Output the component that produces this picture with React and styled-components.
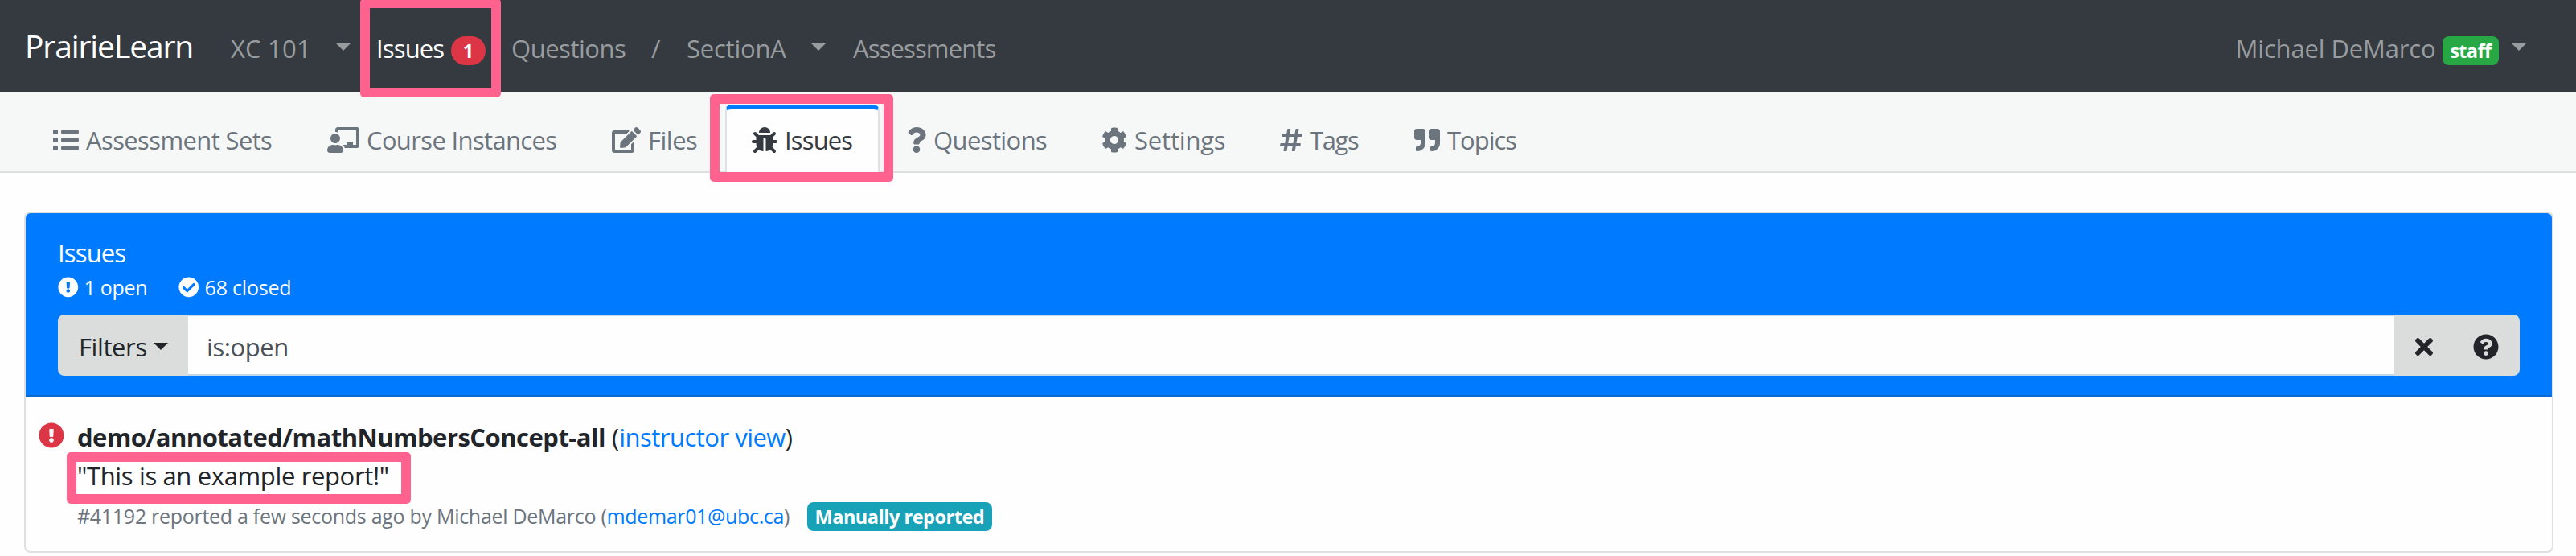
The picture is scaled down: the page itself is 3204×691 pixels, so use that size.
import React from 'react';
import styled, { createGlobalStyle, css } from 'styled-components';
import {
  FaList,
  FaChalkboardTeacher,
  FaEdit,
  FaBug,
  FaQuestion,
  FaCog,
  FaHashtag,
  FaQuoteRight,
  FaExclamationCircle,
  FaCheckCircle,
  FaTimes,
  FaQuestionCircle,
} from 'react-icons/fa';

const GlobalStyle = createGlobalStyle`
  *, *::before, *::after { box-sizing: border-box; }
  body {
    margin: 0;
    background: #fefefe;
    color: #212529;
    font-family: "Open Sans", "Noto Sans", sans-serif;
    font-size: 31px;
    line-height: 48px;
  }
`;

const Page = styled.div`
  position: relative;
  height: 691px;
  overflow: hidden;
`;

const Text = styled.span`
  white-space: nowrap;
  letter-spacing: ${({ $track = 0 }) => $track}px;
`;

const Link = styled.a`
  color: #007bff;
  white-space: nowrap;
  letter-spacing: ${({ $track = 0 }) => $track}px;
`;

/* Top bar */

const NavBar = styled.nav`
  display: flex;
  align-items: baseline;
  height: 114px;
  padding: 26.5px 62px 0 31px;
  background: #343a40;
  color: #999c9f;
  line-height: 60px;
`;

const Brand = styled.div`
  width: 256px;
  color: #fff;
  font-size: 39px;
  letter-spacing: -1.1px;
`;

const NavItem = styled.div`
  display: flex;
  align-items: baseline;
  flex: none;
  width: ${({ $width }) => $width}px;
  color: ${({ $active }) => ($active ? '#fff' : 'inherit')};
`;

const UserMenu = styled.div`
  display: flex;
  align-items: baseline;
  margin-left: auto;
`;

const Caret = styled.span`
  align-self: flex-start;
  width: 0;
  height: 0;
  margin-top: ${({ $top = 0 }) => $top}px;
  margin-left: ${({ $gap }) => $gap}px;
  border: 9.6px solid transparent;
  border-top-color: currentColor;
  border-bottom: 0;
`;

const tones = { danger: '#dc3545', success: '#28a745', info: '#17a2b8' };

const Badge = styled.span`
  display: inline-block;
  height: 36px;
  padding: 1px ${({ $pill }) => ($pill ? 14.4 : 9.6)}px 0;
  margin-left: ${({ $gap = 8 }) => $gap}px;
  border-radius: ${({ $pill }) => ($pill ? 18 : 8)}px;
  background: ${({ $tone }) => tones[$tone]};
  color: #fff;
  font-size: 23.5px;
  font-weight: 700;
  line-height: 35px;
  white-space: nowrap;
  letter-spacing: ${({ $track = 0 }) => $track}px;
`;

/* Tab strip */

const TabStrip = styled.div`
  display: flex;
  height: 101px;
  padding: 16px 32px 0;
  background: #f6f8f8;
  box-shadow: inset 0 -2px #dbdfe0;
`;

const Tab = styled.div`
  display: flex;
  flex: none;
  align-items: center;
  width: ${({ $width }) => $width}px;
  height: 85px;
  padding: 1px 0 0 32px;
  border: 2px solid transparent;
  border-bottom: 0;
  color: #6c757d;
  ${({ $active }) =>
    $active &&
    css`
      padding: 0 0 3px 31px;
      border-color: #dee2e6;
      border-top: 6px solid #007bff;
      border-radius: 8px 8px 0 0;
      background: #fefefe;
      color: #343a40;
    `}
`;

const Icon = styled.span`
  display: flex;
  flex: none;
  width: ${({ $width = 32 }) => $width}px;
  height: ${({ $size = 32 }) => $size}px;
  margin-right: ${({ $gap = 8 }) => $gap}px;
  svg {
    width: 100%;
    height: 100%;
  }
`;

/* Issue card */

const Card = styled.section`
  height: 424px;
  margin: 48px 28px 0 30px;
  border: 2px solid #dfdfdf;
  border-radius: 8px;
  background: #fefefe;
  overflow: hidden;
`;

const CardHeader = styled.header`
  height: 228px;
  padding: 25px 40px 0;
  border-bottom: 2px solid #0a6bd2;
  background: #007bff;
  color: #fff;
`;

const CardTitle = styled.div`
  height: 48px;
  letter-spacing: -0.85px;
`;

const Counts = styled.div`
  display: flex;
  height: 38px;
  font-size: 25px;
  line-height: 38px;
`;

const Count = styled.div`
  display: flex;
  align-items: center;
  width: ${({ $width }) => $width}px;
`;

const SearchGroup = styled.div`
  display: flex;
  height: 76px;
  margin-top: 15px;
  border-radius: 8px;
  overflow: hidden;
  color: #212529;
`;

const FilterButton = styled.div`
  display: flex;
  align-items: center;
  width: 162px;
  padding: 4px 0 0 26px;
  background: #dadddc;
`;

const SearchField = styled.div`
  display: flex;
  flex: 1;
  align-items: center;
  padding: 4px 23px 0;
  border: solid #c3d7e8;
  border-width: 2px 0;
  background: #fefefe;
  color: #495057;
`;

const SearchActions = styled.div`
  display: flex;
  align-items: center;
  width: 156px;
  padding: 4px 0 0 26px;
  background: #dadddc;
`;

const IssueRow = styled.article`
  display: flex;
  padding: 26px 16px 0;
`;

const StatusIcon = styled(Icon)`
  margin-top: 6px;
  color: #dc3545;
`;

const IssueTitle = styled.div`
  display: flex;
`;

const IssueName = styled.strong`
  width: 665px;
  font-weight: 700;
  white-space: nowrap;
  letter-spacing: -0.52px;
`;

const IssueMeta = styled.div`
  display: flex;
  align-items: baseline;
  height: 36px;
  margin-top: 8px;
  color: #6c757d;
  font-size: 25px;
  line-height: 36px;
`;

const Highlight = styled.div`
  position: absolute;
  left: ${({ $x }) => $x}px;
  top: ${({ $y }) => $y}px;
  width: ${({ $w }) => $w}px;
  height: ${({ $h }) => $h}px;
  border-radius: 5px;
  border: 12px solid #ff628f;
`;

const tabs = [
  { label: 'Assessment Sets', icon: FaList, width: 341, track: -0.62 },
  { label: 'Course Instances', icon: FaChalkboardTeacher, iconWidth: 40, width: 354, track: -0.65 },
  { label: 'Files', icon: FaEdit, iconWidth: 36, width: 175, track: -0.5 },
  { label: 'Issues', icon: FaBug, width: 192, track: -0.85, active: true },
  { label: 'Questions', icon: FaQuestion, iconWidth: 24, width: 242, track: -0.6 },
  { label: 'Settings', icon: FaCog, width: 222, track: -0.19 },
  { label: 'Tags', icon: FaHashtag, iconWidth: 28, width: 167, track: -1.4 },
  { label: 'Topics', icon: FaQuoteRight, width: 200, track: -1 },
];

export default function App() {
  return (
    <Page>
      <GlobalStyle />
      <NavBar>
        <Brand>PrairieLearn</Brand>
        <NavItem $width={181}>
          <Text $track={0.2}>XC 101</Text>
          <Caret $top={24.5} $gap={31.5} />
        </NavItem>
        <NavItem $width={168} $active>
          <Text $track={-0.85}>Issues</Text>
          <Badge $tone="danger" $pill $gap={9}>1</Badge>
        </NavItem>
        <NavItem $width={174}>
          <Text $track={-0.48}>Questions</Text>
        </NavItem>
        <NavItem $width={44}>/</NavItem>
        <NavItem $width={207}>
          <Text $track={-0.22}>SectionA</Text>
          <Caret $top={24.5} $gap={31.5} />
        </NavItem>
        <NavItem $width={180}>
          <Text $track={-0.88}>Assessments</Text>
        </NavItem>
        <UserMenu>
          <Text $track={-0.15}>Michael DeMarco</Text>
          <Badge $tone="success" $track={-0.6}>staff</Badge>
          <Caret $top={24.5} $gap={16} />
        </UserMenu>
      </NavBar>

      <TabStrip>
        {tabs.map(({ label, icon: Glyph, iconWidth, width, track, active }) => (
          <Tab key={label} $width={width} $active={active}>
            <Icon $width={iconWidth} $gap={9}>
              <Glyph />
            </Icon>
            <Text $track={track}>{label}</Text>
          </Tab>
        ))}
      </TabStrip>

      <Card>
        <CardHeader>
          <CardTitle>Issues</CardTitle>
          <Counts>
            <Count $width={150}>
              <Icon $width={25.6} $size={25.6} $gap={7}>
                <FaExclamationCircle />
              </Icon>
              <Text $track={-0.3}>1 open</Text>
            </Count>
            <Count $width={160}>
              <Icon $width={25.6} $size={25.6} $gap={7}>
                <FaCheckCircle />
              </Icon>
              <Text $track={-0.2}>68 closed</Text>
            </Count>
          </Counts>
          <SearchGroup>
            <FilterButton>
              <Text $track={-0.4}>Filters</Text>
              <Caret $top={31} $gap={8} />
            </FilterButton>
            <SearchField>
              <Text $track={-0.43}>is:open</Text>
            </SearchField>
            <SearchActions>
              <Icon $width={22} $gap={50}>
                <FaTimes />
              </Icon>
              <Icon $gap={0}>
                <FaQuestionCircle />
              </Icon>
            </SearchActions>
          </SearchGroup>
        </CardHeader>
        <IssueRow>
          <StatusIcon $gap={16}>
            <FaExclamationCircle />
          </StatusIcon>
          <div>
            <IssueTitle>
              <IssueName>demo/annotated/mathNumbersConcept-all</IssueName>
              <Text>(</Text>
              <Link $track={-0.51}>instructor view</Link>
              <Text>)</Text>
            </IssueTitle>
            <Text as="div" $track={-0.36}>&quot;This is an example report!&quot;</Text>
            <IssueMeta>
              <Text $track={-0.29}>#41192 reported a few seconds ago by Michael DeMarco (</Text>
              <Link $track={-0.35}>mdemar01@ubc.ca</Link>
              <Text>)</Text>
              <Badge $tone="info" $gap={21.5} $track={-0.48}>Manually reported</Badge>
            </IssueMeta>
          </div>
        </IssueRow>
      </Card>

      <Highlight $x={448} $y={-2} $w={175} $h={123} />
      <Highlight $x={883} $y={117} $w={228} $h={109} />
      <Highlight $x={83} $y={562} $w={428} $h={64} />
    </Page>
  );
}
